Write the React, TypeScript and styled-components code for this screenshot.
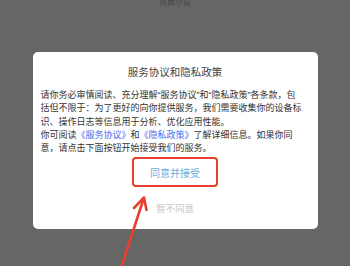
import React from "react";
import styled, { createGlobalStyle } from "styled-components";

const Global = createGlobalStyle`
  html, body { margin: 0; padding: 0; background: #666666; }
  body { font-family: "Liberation Sans", "Noto Sans CJK SC", sans-serif; }
`;

const Screen = styled.div`
  position: relative;
  width: 350px;
  height: 266px;
  overflow: hidden;
  background: #666666;
  display: flex;
  flex-direction: column;
  align-items: center;
`;

const AppName = styled.div`
  margin-top: -2px;
  height: 9px;
  line-height: 9px;
  font-size: 8px;
  color: #464646;
`;

const Dialog = styled.div`
  margin-top: 45px;
  width: 285px;
  box-sizing: border-box;
  background: #ffffff;
  border-radius: 5px;
  padding: 12px 8px 13px;
  display: flex;
  flex-direction: column;
  align-items: center;
`;

const Title = styled.div`
  font-size: 10.5px;
  line-height: 16px;
  color: #444444;
`;

const Body = styled.p`
  margin: 9px 6px 0 0;
  align-self: stretch;
  font-size: 9px;
  line-height: 13.3px;
  color: #333333;
  text-align: left;
`;

const Link = styled.span`
  color: #4b6cf0;
`;

const PrimaryButton = styled.div`
  margin-top: 2px;
  width: 86px;
  height: 30px;
  box-sizing: border-box;
  border: 2px solid #e8402c;
  border-radius: 4px;
  display: flex;
  align-items: center;
  justify-content: center;
  font-size: 10px;
  color: #6aaede;
`;

const SecondaryButton = styled.div`
  margin-top: 15px;
  line-height: 14px;
  font-size: 9.5px;
  color: #c8c8c8;
`;

const Arrow = styled.svg`
  position: absolute;
  left: 0;
  top: 0;
  pointer-events: none;
`;

export default function App() {
  return (
    <>
      <Global />
      <Screen>
        <AppName>风舞小说</AppName>
        <Dialog>
          <Title>服务协议和隐私政策</Title>
          <Body>
            请你务必审慎阅读、充分理解“服务协议”和“隐私政策”各条款，包括但不限于：为了更好的向你提供服务，我们需要收集你的设备标识、操作日志等信息用于分析、优化应用性能。
            <br />
            你可阅读<Link>《服务协议》</Link>和<Link>《隐私政策》</Link>了解详细信息。如果你同意，请点击下面按钮开始接受我们的服务。
          </Body>
          <PrimaryButton>同意并接受</PrimaryButton>
          <SecondaryButton>暂不同意</SecondaryButton>
        </Dialog>
        <Arrow width="350" height="266" viewBox="0 0 350 266">
          <path
            d="M121 268 L143.5 199"
            stroke="#e8402c"
            strokeWidth="2.6"
            fill="none"
            strokeLinecap="round"
          />
          <path
            d="M134 208 L144 197.5 L146.5 210"
            stroke="#e8402c"
            strokeWidth="2.6"
            fill="none"
            strokeLinecap="round"
            strokeLinejoin="round"
          />
        </Arrow>
      </Screen>
    </>
  );
}
